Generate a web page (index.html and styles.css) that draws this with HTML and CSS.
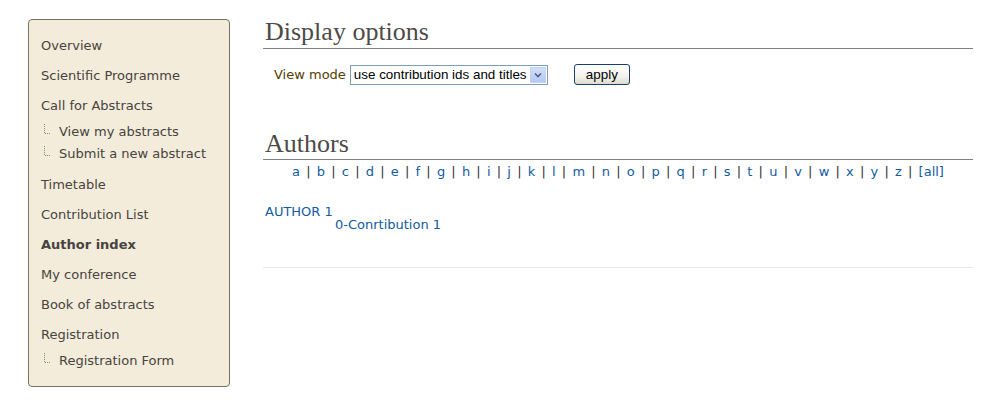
FILE: index.html
```html
<!DOCTYPE html>
<html>
<head>
<meta charset="utf-8">
<link rel="stylesheet" href="styles.css">
</head>
<body>
<div class="layout">
  <nav class="sidebar">
    <a class="item">Overview</a>
    <a class="item">Scientific Programme</a>
    <a class="item">Call for Abstracts</a>
    <div class="sub">
      <a class="subitem"><svg class="tree" width="8" height="10" viewBox="0 0 8 10"><path d="M0.5 0v9.5H7" fill="none" stroke="#8a8a8a" stroke-width="1" stroke-dasharray="1 1"/></svg>View my abstracts</a>
      <a class="subitem"><svg class="tree" width="8" height="10" viewBox="0 0 8 10"><path d="M0.5 0v9.5H7" fill="none" stroke="#8a8a8a" stroke-width="1" stroke-dasharray="1 1"/></svg>Submit a new abstract</a>
    </div>
    <a class="item">Timetable</a>
    <a class="item">Contribution List</a>
    <a class="item current">Author index</a>
    <a class="item">My conference</a>
    <a class="item">Book of abstracts</a>
    <a class="item">Registration</a>
    <div class="sub">
      <a class="subitem"><svg class="tree" width="8" height="10" viewBox="0 0 8 10"><path d="M0.5 0v9.5H7" fill="none" stroke="#8a8a8a" stroke-width="1" stroke-dasharray="1 1"/></svg>Registration Form</a>
    </div>
  </nav>
  <main class="main">
    <h2 class="heading">Display options</h2>
    <div class="options">
      <span class="label">View mode</span>
      <span class="selectwrap">
        <select class="select"><option>use contribution ids and titles</option></select>
        <span class="arrow"><svg width="8" height="6" viewBox="0 0 8 6"><path d="M1 1.5l3 3 3-3" fill="none" stroke="#4d6185" stroke-width="1.6"/></svg></span>
      </span>
      <button class="apply">apply</button>
    </div>
    <h2 class="heading authors">Authors</h2>
    <div class="letters">
      <a>a</a><span class="sep">|</span><a>b</a><span class="sep">|</span><a>c</a><span class="sep">|</span><a>d</a><span class="sep">|</span><a>e</a><span class="sep">|</span><a>f</a><span class="sep">|</span><a>g</a><span class="sep">|</span><a>h</a><span class="sep">|</span><a>i</a><span class="sep">|</span><a>j</a><span class="sep">|</span><a>k</a><span class="sep">|</span><a>l</a><span class="sep">|</span><a>m</a><span class="sep">|</span><a>n</a><span class="sep">|</span><a>o</a><span class="sep">|</span><a>p</a><span class="sep">|</span><a>q</a><span class="sep">|</span><a>r</a><span class="sep">|</span><a>s</a><span class="sep">|</span><a>t</a><span class="sep">|</span><a>u</a><span class="sep">|</span><a>v</a><span class="sep">|</span><a>w</a><span class="sep">|</span><a>x</a><span class="sep">|</span><a>y</a><span class="sep">|</span><a>z</a><span class="sep">|</span><a>[all]</a>
    </div>
    <div class="authorlist">
      <a class="author">AUTHOR 1</a>
      <a class="contrib">0-Conrtibution 1</a>
    </div>
    <div class="endline"></div>
  </main>
</div>
</body>
</html>
```
FILE: styles.css
```css
html, body {
  margin: 0;
  padding: 0;
  background: #ffffff;
}

.layout {
  display: flex;
  align-items: flex-start;
  padding: 16px 0 0 28px;
  font-family: "DejaVu Sans", Verdana, sans-serif;
  font-size: 13px;
}

.sidebar {
  margin-top: 3px;
  width: 200px;
  box-sizing: content-box;
  background: #f3ecda;
  border: 1px solid #7a7060;
  border-radius: 4px;
  padding: 10px 0;
  display: flex;
  flex-direction: column;
}

.item {
  display: block;
  height: 28px;
  line-height: 28px;
  padding: 2px 0 0 12px;
  color: #474340;
}

.item.current {
  font-weight: bold;
}

.sub {
  display: flex;
  flex-direction: column;
  padding-bottom: 5px;
}

.subitem {
  display: flex;
  align-items: center;
  height: 22px;
  padding-left: 15px;
  color: #474340;
}

.tree {
  margin-right: 7px;
  margin-top: -4px;
}

.main {
  margin-left: 33px;
  width: 710px;
}

.heading {
  margin: 0;
  font-family: "Liberation Serif", "Times New Roman", serif;
  font-weight: normal;
  font-size: 26px;
  line-height: 28px;
  color: #4d4a47;
  padding: 2px 0 2px 2px;
  border-bottom: 1px solid #808080;
}

.heading.authors {
  margin-top: 43px;
  padding-bottom: 1px;
}

.options {
  display: flex;
  align-items: center;
  margin-top: 15px;
  padding-left: 11px;
  height: 21px;
}

.label {
  font-family: "DejaVu Sans", Verdana, sans-serif;
  font-size: 13px;
  color: #544000;
  margin-right: 4px;
}

.selectwrap {
  position: relative;
  display: inline-block;
  height: 20px;
}

.select {
  -webkit-appearance: none;
  appearance: none;
  width: 198px;
  height: 20px;
  box-sizing: border-box;
  border: 1px solid #7f9db9;
  border-radius: 0;
  background: #ffffff;
  font-family: "Liberation Sans", Arial, sans-serif;
  font-size: 13.4px;
  color: #000;
  padding: 0 0 0 3px;
  margin: 0;
  outline: none;
}

.arrow {
  position: absolute;
  right: 2px;
  top: 2px;
  width: 16px;
  height: 16px;
  box-sizing: border-box;
  background: linear-gradient(#d2def8, #b4c8f3);
  border: 1px solid #c1d3fb;
  display: flex;
  align-items: center;
  justify-content: center;
}

.apply {
  margin-left: 26px;
  width: 56px;
  height: 21px;
  box-sizing: border-box;
  border: 1px solid #1c3f6e;
  border-radius: 3px;
  background: linear-gradient(#ffffff, #f3f2ec 60%, #dcdad0);
  font-family: "Liberation Sans", Arial, sans-serif;
  font-size: 13.4px;
  color: #000;
  padding: 0;
  line-height: 19px;
}

.letters {
  margin-top: 4px;
  text-align: center;
  line-height: 16px;
  color: #333;
}

.letters a {
  color: #115ba0;
}

.sep {
  margin: 0 6.2px;
  color: #333;
}

.authorlist {
  margin-top: 25px;
  padding-left: 2px;
  display: flex;
  flex-direction: column;
  align-items: flex-start;
  line-height: 13px;
}

.author, .contrib {
  color: #115ba0;
}

.contrib {
  padding-left: 70px;
}

.endline {
  margin-top: 36px;
  border-top: 1px solid #e6e6e6;
}
```
